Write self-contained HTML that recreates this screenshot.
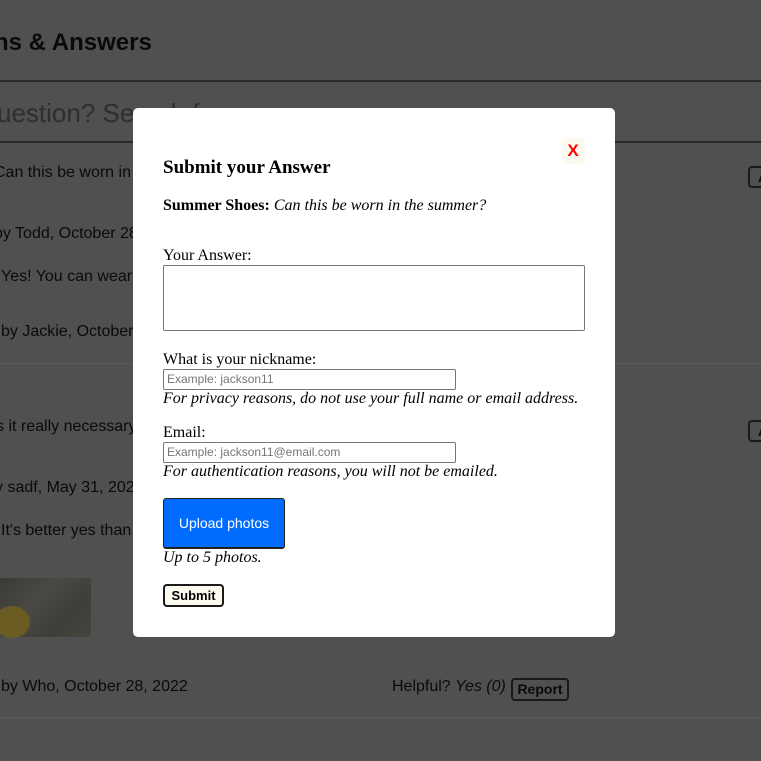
<!DOCTYPE html>
<html><head><style>
*{margin:0;padding:0;box-sizing:border-box}
body{width:761px;height:761px;overflow:hidden;background:#505050;position:relative;font-family:"Liberation Sans",sans-serif;color:#0a0a0a}
.a{position:absolute;white-space:nowrap}
.s{font-family:"Liberation Serif",serif;color:#000}
.line{position:absolute;left:0;width:761px}
.btn{position:absolute;border:2px solid #1a1a1a;border-radius:4px;font-weight:bold;font-size:14px;text-align:center}
</style></head><body>
<div class="a" style="left:-6px;top:29px;font-size:24px;font-weight:bold">ns &amp; Answers</div>
<div class="line" style="top:80px;height:2px;background:#2a2a2a"></div>
<div class="a" style="left:-3px;top:98px;font-size:26px;color:#2e2e2e">uestion? Search for answers</div>
<div class="line" style="top:141px;height:2px;background:#2a2a2a"></div>
<div class="a" style="left:-6px;top:164px;font-size:16px">Can this be worn in the summer?</div>
<div class="btn" style="left:748px;top:166px;width:30px;height:22px;line-height:18px">A</div>
<div class="a" style="left:-6px;top:225px;font-size:16px">by Todd, October 28, 2022</div>
<div class="a" style="left:1px;top:268px;font-size:16px">Yes! You can wear these in the summer</div>
<div class="a" style="left:1px;top:323px;font-size:16px">by Jackie, October 28, 2022</div>
<div class="line" style="top:363px;height:1px;background:#595959"></div>
<div class="a" style="left:-4px;top:418px;font-size:16px">s it really necessary?</div>
<div class="btn" style="left:748px;top:420px;width:30px;height:22px;line-height:18px">A</div>
<div class="a" style="left:-5px;top:479px;font-size:16px">y sadf, May 31, 2022</div>
<div class="a" style="left:1px;top:522px;font-size:16px">It's better yes than no</div>
<div class="a" style="left:0;top:578px;width:91px;height:59px;background:linear-gradient(135deg,#3a3a36 0%,#4a4944 40%,#403e3a 70%,#45443e 100%)"><div style="position:absolute;left:-6px;top:28px;width:36px;height:32px;border-radius:50%;background:#6a5c22"></div></div>
<div class="a" style="left:1px;top:678px;font-size:16px">by Who, October 28, 2022</div>
<div class="a" style="left:392px;top:678px;font-size:16px">Helpful? <i>Yes (0)</i></div>
<div class="btn" style="left:511px;top:678px;width:58px;height:23px;line-height:19px">Report</div>
<div class="line" style="top:717px;height:1px;background:#595959"></div>

<div class="a" style="left:133px;top:108px;width:482px;height:529px;background:#fff;border-radius:5px"></div>
<div class="a" style="left:561px;top:138px;width:24px;height:26px;background:#fcf9ef;border-radius:6px;color:#f00;font-weight:bold;font-size:17px;text-align:center;line-height:26px">X</div>
<div class="a s" style="left:163px;top:157px;font-size:19px;font-weight:bold">Submit your Answer</div>
<div class="a s" style="left:163px;top:197px;font-size:16px"><b>Summer Shoes:</b> <i>Can this be worn in the summer?</i></div>
<div class="a s" style="left:163px;top:247px;font-size:16px">Your Answer:</div>
<div class="a" style="left:163px;top:265px;width:422px;height:66px;border:1px solid #767676;border-radius:2px"></div>
<div class="a s" style="left:163px;top:351px;font-size:16px">What is your nickname:</div>
<div class="a" style="left:163px;top:369px;width:293px;height:21px;border:1px solid #767676;border-radius:2px;font-size:12px;color:#757575;padding-left:3px;line-height:19px">Example: jackson11</div>
<div class="a s" style="left:163px;top:390px;font-size:16px;font-style:italic">For privacy reasons, do not use your full name or email address.</div>
<div class="a s" style="left:163px;top:424px;font-size:16px">Email:</div>
<div class="a" style="left:163px;top:442px;width:293px;height:21px;border:1px solid #767676;border-radius:2px;font-size:12px;color:#757575;padding-left:3px;line-height:19px">Example: jackson11@email.com</div>
<div class="a s" style="left:163px;top:463px;font-size:16px;font-style:italic">For authentication reasons, you will not be emailed.</div>
<div class="a" style="left:163px;top:498px;width:122px;height:51px;background:#006cff;border:1px solid #222;border-bottom-width:2px;border-radius:3px;color:#fff;font-size:14px;text-align:center;line-height:49px">Upload photos</div>
<div class="a s" style="left:163px;top:549px;font-size:16px;font-style:italic">Up to 5 photos.</div>
<div class="btn" style="left:163px;top:584px;width:61px;height:23px;line-height:19px;background:#fcf9ef;font-size:13px;color:#000">Submit</div>
</body></html>
